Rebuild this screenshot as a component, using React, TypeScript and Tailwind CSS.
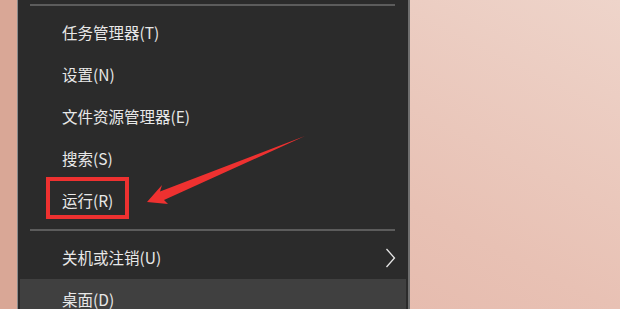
const items = [
  "任务管理器(T)",
  "设置(N)",
  "文件资源管理器(E)",
  "搜索(S)",
  "运行(R)",
];

function Separator({ top }: { top: string }) {
  return <div className={`${top} mb-[6px] mx-[12px] mr-[13px] h-[2px] bg-[#5c5c5c]`} />;
}

export default function App() {
  return (
    <div
      className="relative w-[620px] h-[309px] overflow-hidden flex bg-gradient-to-tr from-[#e3b3a5] via-[#e8c1b4] to-[#eed4ca]"
      style={{ fontFamily: '"Noto Sans CJK SC", "Noto Sans", sans-serif' }}
    >
      <div className="w-[17px] shrink-0 bg-[#d9a796]" />
      <div className="w-[393px] shrink-0 bg-[#2b2b2b] border-l border-l-[#8a8a8a] border-r-2 border-r-[#6e6e6e] text-[15.5px] text-[#e8e8e8]">
        <Separator top="mt-[4px]" />
        {items.map((t) => (
          <div key={t} className="h-[42px] flex items-center pl-[44px]">
            {t}
          </div>
        ))}
        <Separator top="mt-[7px]" />
        <div className="h-[42px] flex items-center justify-between pl-[44px] pr-[12px]">
          <span>关机或注销(U)</span>
          <svg width="11" height="20" viewBox="0 0 11 20" fill="none">
            <polyline points="1.5,1 9.5,10 1.5,19" stroke="#e6e6e6" strokeWidth="1.3" />
          </svg>
        </div>
        <div className="h-[42px] mx-[2px] bg-[#404040] flex items-center pl-[42px]">桌面(D)</div>
      </div>

      {/* 红框 */}
      <div className="absolute left-[46px] top-[177px] w-[83px] h-[42px] border-[4px] border-[#ee3130]" />

      {/* 箭头 */}
      <svg className="absolute left-0 top-0" width="620" height="309" viewBox="0 0 620 309">
        <polygon
          points="147,202 162,185 160,191.5 305,136 164,200 168,204"
          fill="#ee3130"
        />
      </svg>
    </div>
  );
}
